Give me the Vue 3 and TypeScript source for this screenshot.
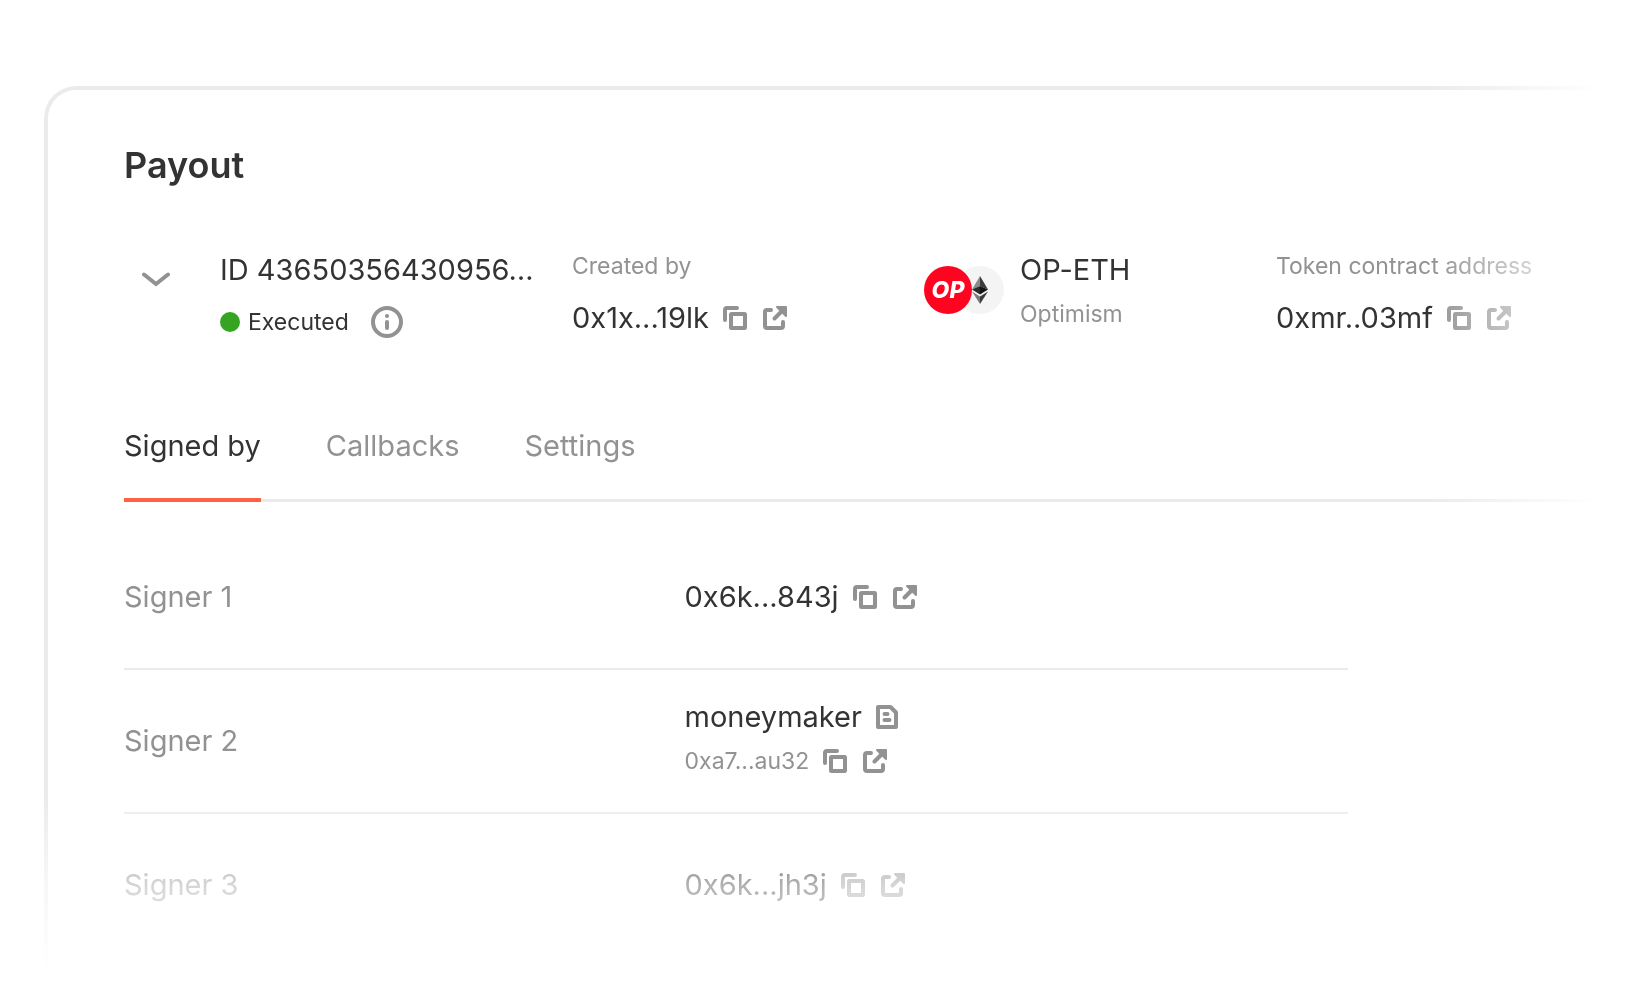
<script setup lang="ts">
import { ref } from 'vue'

interface Signer {
  label: string
  address: string
  name?: string
}

const tabs: string[] = ['Signed by', 'Callbacks', 'Settings']
const activeTab = ref<string>('Signed by')

const signers: Signer[] = [
  { label: 'Signer 1', address: '0x6k...843j' },
  { label: 'Signer 2', address: '0xa7...au32', name: 'moneymaker' },
  { label: 'Signer 3', address: '0x6k...jh3j' },
]
</script>

<template>
  <svg class="sprite" aria-hidden="true">
    <symbol id="icon-copy" viewBox="0 0 24 24">
      <path d="M2 14V4a2 2 0 0 1 2-2h10" fill="none" stroke="currentColor" stroke-width="4" stroke-linecap="round" />
      <rect x="8" y="8" width="14" height="14" rx="0.5" fill="none" stroke="currentColor" stroke-width="4" stroke-linejoin="round" />
    </symbol>
    <symbol id="icon-open" viewBox="0 0 24 24">
      <path d="M8 4H4a2 2 0 0 0-2 2v14a2 2 0 0 0 2 2h14a2 2 0 0 0 2-2v-4" fill="none" stroke="currentColor" stroke-width="4" stroke-linecap="round" />
      <path d="M11.5 12.5 19 5" fill="none" stroke="currentColor" stroke-width="4" stroke-linecap="round" />
      <path d="M14 0h9a1 1 0 0 1 1 1v9a1 1 0 0 1-1.700.7l-9-9A1 1 0 0 1 14 0z" fill="currentColor" />
    </symbol>
    <symbol id="icon-contract" viewBox="0 0 22 24">
      <path d="M2 2h12.500L20 7.500V22H2z" fill="none" stroke="currentColor" stroke-width="4" stroke-linejoin="round" />
      <path d="M8.500 9h3M8.500 15h5" fill="none" stroke="currentColor" stroke-width="4" stroke-linecap="round" />
    </symbol>
  </svg>

  <main class="page">
    <section class="card">
      <h1 class="title">Payout</h1>

      <div class="summary">
        <button class="toggle" type="button" aria-label="Collapse payout">
          <svg width="28" height="16" viewBox="0 0 28 16">
            <path d="M2 2.500 14 12 26 2.500" fill="none" stroke="currentColor" stroke-width="4" stroke-linecap="round" stroke-linejoin="miter" />
          </svg>
        </button>

        <div class="field">
          <span class="value">ID 43650356430956…</span>
          <span class="status">
            <span class="dot"></span>
            Executed
            <button class="icon-button info" type="button" aria-label="Status details">
              <svg width="32" height="32" viewBox="0 0 32 32">
                <circle cx="16" cy="16" r="14" fill="none" stroke="currentColor" stroke-width="4" />
                <circle cx="16" cy="10" r="2" fill="currentColor" />
                <path d="M16 16v6" stroke="currentColor" stroke-width="4" stroke-linecap="round" />
              </svg>
            </button>
          </span>
        </div>

        <div class="field wide-gap">
          <span class="caption">Created by</span>
          <span class="address">
            <span class="value">0x1x...19lk</span>
            <button class="icon-button" type="button" aria-label="Copy address"><svg width="24" height="24"><use href="#icon-copy" /></svg></button>
            <a class="icon-button" href="#" aria-label="Open in explorer"><svg width="24" height="24"><use href="#icon-open" /></svg></a>
          </span>
        </div>

        <div class="token">
          <div class="coins">
            <span class="coin op">OP</span>
            <span class="coin eth">
              <svg width="16" height="28" viewBox="0 0 16 28">
                <path d="M8 0 0 13.500 8 10z" fill="#8a8a8a" />
                <path d="M8 0v10l8 3.500z" fill="#3c3c3b" />
                <path d="M8 10v8.500L0 13.500z" fill="#2b2b2b" />
                <path d="M8 10v8.500l8-5z" fill="#141414" />
                <path d="M0 15.500 8 28v-7.500z" fill="#7a7a7a" />
                <path d="M16 15.500 8 28v-7.500z" fill="#3c3c3b" />
              </svg>
            </span>
          </div>
          <div class="token-name">
            <span class="value">OP-ETH</span>
            <span class="caption">Optimism</span>
          </div>
        </div>

        <div class="field wide-gap">
          <span class="caption">Token contract address</span>
          <span class="address">
            <span class="value">0xmr..03mf</span>
            <button class="icon-button" type="button" aria-label="Copy address"><svg width="24" height="24"><use href="#icon-copy" /></svg></button>
            <a class="icon-button" href="#" aria-label="Open in explorer"><svg width="24" height="24"><use href="#icon-open" /></svg></a>
          </span>
        </div>
      </div>

      <div class="tabs" role="tablist">
        <button
          v-for="tab in tabs"
          :key="tab"
          class="tab"
          :class="{ active: tab === activeTab }"
          type="button"
          role="tab"
          :aria-selected="tab === activeTab"
          @click="activeTab = tab"
        >{{ tab }}</button>
      </div>

      <div class="signers">
        <table class="signer-table">
          <tbody>
            <tr v-for="signer in signers" :key="signer.label">
              <th scope="row">{{ signer.label }}</th>
              <td>
                <div v-if="signer.name" class="named">
                  <span class="address">
                    <span class="value">{{ signer.name }}</span>
                    <svg class="contract" width="22" height="24"><use href="#icon-contract" /></svg>
                  </span>
                  <span class="address">
                    <span class="caption">{{ signer.address }}</span>
                    <button class="icon-button" type="button" aria-label="Copy address"><svg width="24" height="24"><use href="#icon-copy" /></svg></button>
                    <a class="icon-button" href="#" aria-label="Open in explorer"><svg width="24" height="24"><use href="#icon-open" /></svg></a>
                  </span>
                </div>
                <span v-else class="address">
                  <span class="value">{{ signer.address }}</span>
                  <button class="icon-button" type="button" aria-label="Copy address"><svg width="24" height="24"><use href="#icon-copy" /></svg></button>
                  <a class="icon-button" href="#" aria-label="Open in explorer"><svg width="24" height="24"><use href="#icon-open" /></svg></a>
                </span>
              </td>
            </tr>
          </tbody>
        </table>
      </div>
    </section>
  </main>
</template>

<style>
body {
  background: #fff;
}
</style>

<style scoped>
.sprite {
  position: absolute;
  width: 0;
  height: 0;
}

.page {
  padding: 86px 32px 0 44px;
  font-family: Inter, Roboto, sans-serif;
  font-variant-ligatures: no-contextual;
  color: #333;
}

/* The card dissolves towards the right and bottom edges. */
.card {
  box-sizing: border-box;
  padding: 54px 0 18px 76px;
  border: solid #ebebec;
  border-width: 4px 0 0 4px;
  border-radius: 32px 0 0 0;
  mask-image:
    linear-gradient(to left, transparent, #000 170px),
    linear-gradient(to top, transparent 4px, rgba(0, 0, 0, 0.38) 90px, #000 182px);
  mask-composite: intersect;
}

.title {
  margin: 0 0 66px;
  font-size: 36px;
  line-height: 42px;
  font-weight: 600;
}

.summary {
  display: grid;
  grid-template-columns: 96px 352fr 352fr 352fr 324fr;
  align-items: start;
  white-space: nowrap;
}

.toggle {
  display: flex;
  width: 64px;
  height: 56px;
  padding: 0;
  align-items: center;
  justify-content: center;
  border: 0;
  background: none;
  color: #929292;
  cursor: pointer;
}

.field {
  display: flex;
  min-width: 0;
  flex-direction: column;
  gap: 18px;
}

.wide-gap {
  gap: 20px;
}

.value {
  font-size: 29px;
  line-height: 36px;
}

.caption {
  font-size: 23px;
  line-height: 28px;
  color: #929292;
}

.status {
  display: flex;
  align-items: center;
  gap: 8px;
  font-size: 23px;
  line-height: 32px;
}

.dot {
  width: 20px;
  height: 20px;
  border-radius: 50%;
  background: #34a422;
}

.icon-button {
  display: flex;
  padding: 0;
  border: 0;
  background: none;
  color: #929292;
  cursor: pointer;
}

.info {
  margin-left: 14px;
}

.address {
  display: flex;
  height: 36px;
  align-items: center;
  gap: 14px;
}

.address a {
  margin-left: 2px;
}

.token {
  display: flex;
  align-items: center;
  gap: 16px;
}

.coins {
  display: flex;
}

.coin {
  display: flex;
  width: 48px;
  height: 48px;
  align-items: center;
  justify-content: center;
  border-radius: 50%;
}

.op {
  z-index: 1;
  background: #ff0420;
  color: #fff;
  font-size: 23px;
  font-style: italic;
  font-weight: 800;
}

.eth {
  margin-left: -16px;
  background: #f4f4f4;
}

.token-name {
  display: flex;
  flex-direction: column;
  gap: 12px;
}

.tabs {
  display: flex;
  margin-top: 90px;
  gap: 65px;
  box-shadow: inset 0 -3px #ebebeb;
}

.tab {
  padding: 0 0 34px;
  border: 0;
  border-bottom: 4px solid transparent;
  background: none;
  font: inherit;
  font-size: 29px;
  line-height: 36px;
  color: #929292;
  cursor: pointer;
}

.tab.active {
  border-color: #ff6242;
  color: #333;
}

.signers {
  padding: 24px 252px 0 0;
}

.signer-table {
  width: 100%;
  border-collapse: separate;
  border-spacing: 0;
  table-layout: fixed;
}

.signer-table th,
.signer-table td {
  box-sizing: border-box;
  height: 144px;
  padding: 0;
  border-bottom: 2px solid #ebebeb;
  vertical-align: middle;
}

.signer-table tr:last-child > * {
  border-bottom-color: transparent;
}

.signer-table th {
  width: 45.8%;
  font-size: 29px;
  line-height: 36px;
  font-weight: 400;
  text-align: left;
  color: #929292;
}

.named {
  display: flex;
  padding-bottom: 4px;
  flex-direction: column;
  gap: 8px;
}

.contract {
  color: #929292;
}
</style>
